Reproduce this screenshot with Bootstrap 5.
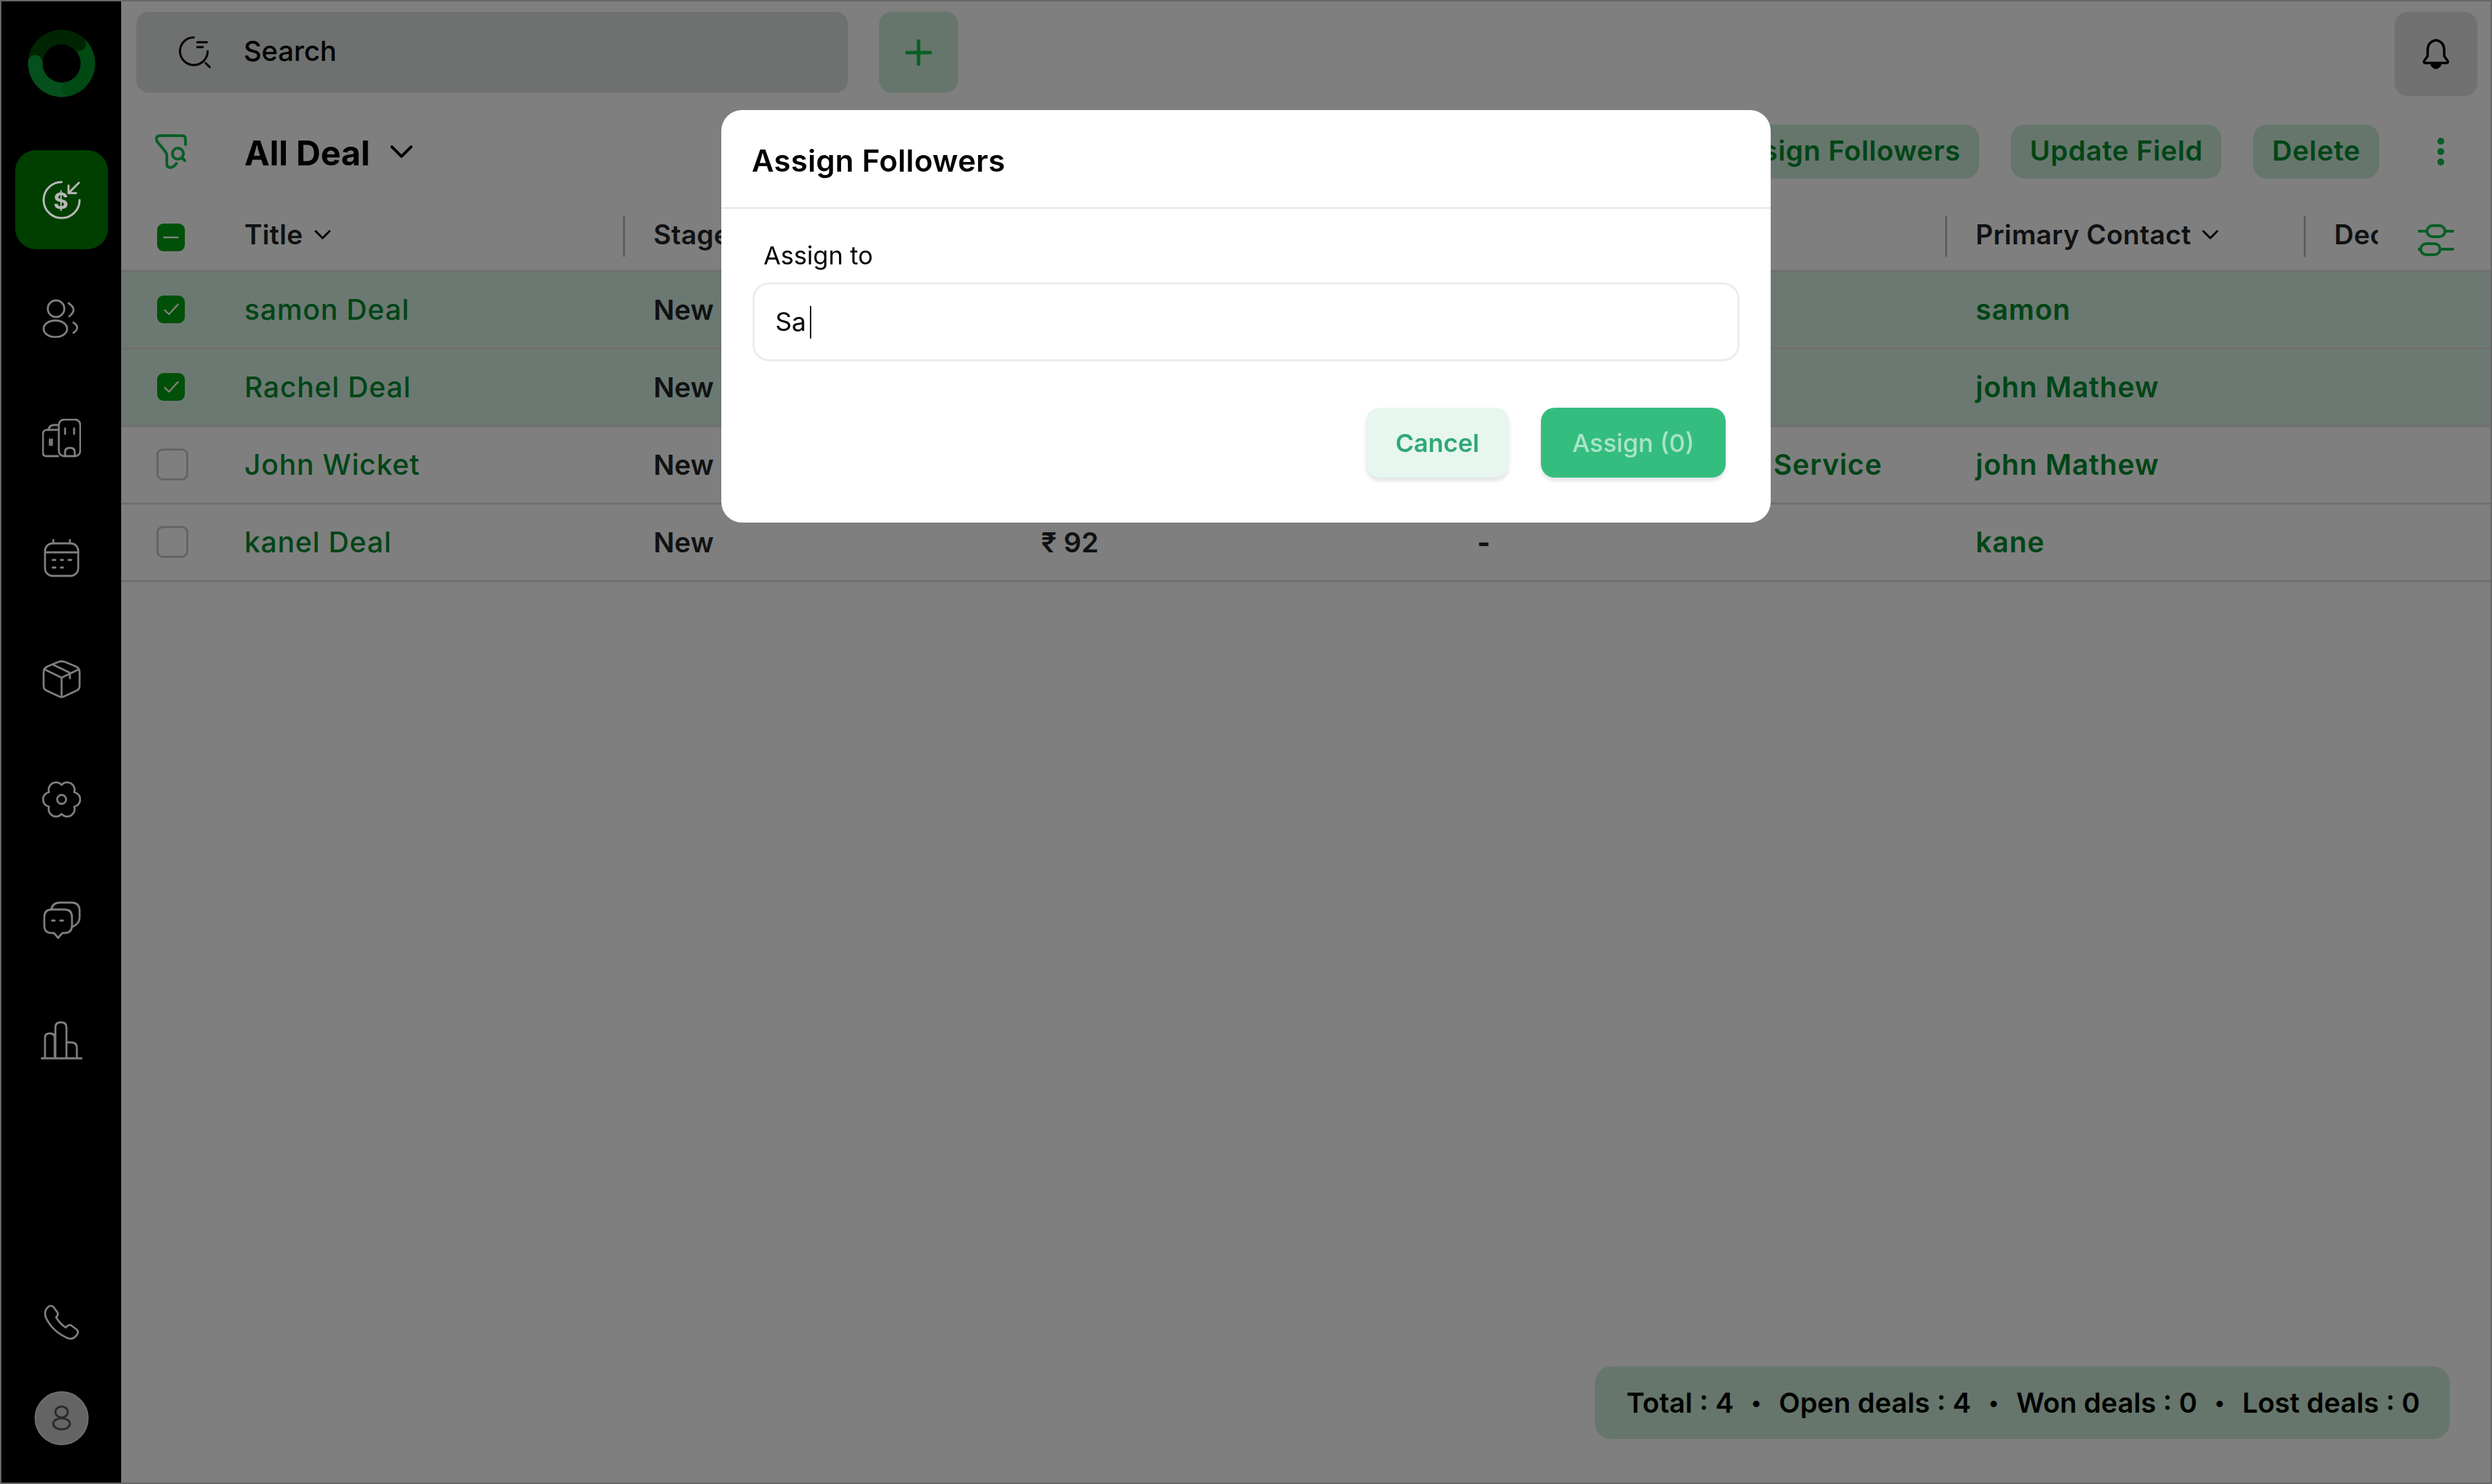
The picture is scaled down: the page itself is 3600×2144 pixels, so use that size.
<!DOCTYPE html>
<html lang="en">
<head>
<meta charset="utf-8">
<title>All Deal</title>
<link href="https://cdn.jsdelivr.net/npm/bootstrap@5.3.0/dist/css/bootstrap.min.css" rel="stylesheet">
<style>
:root{--leaf:#008a2e;--leaf-line:#12bc4a;--tint:#ccecd9;}
html,body{height:100%;}
body{font-family:"Inter","Liberation Sans",sans-serif;font-size:40px;color:#000;background:#fff;overflow:hidden;}
.app-frame{height:100vh;border:2px solid #ccc;}
.side-rail{width:173px;background:#000;flex:none;}
.brand-mark{width:100px;height:100px;margin-top:40px;}
.rail-active{width:134px;height:143px;margin-top:75px;margin-bottom:12px;border-radius:30px;background:#007e00;}
.rail-active svg{position:relative;z-index:1060;}
.rail-item{height:174px;}
.rail-line{fill:none;stroke:#fff;stroke-width:2.8;stroke-linecap:round;stroke-linejoin:round;}
.rail-bottom{margin-top:auto;margin-bottom:54px;gap:71px;}
.user-chip{width:78px;height:78px;border-radius:50%;background:#c8c8c8;border:2px solid #e0e0e0;}
.main-pane{min-width:0;}
.top-strip{padding:15px 19px 0 22px;}
.search-box{width:1028px;height:117px;border-radius:18px;background:#dde2de;padding-left:61px;font-weight:500;}
.search-box span{margin-left:46px;margin-top:-4px;}
.add-tile{width:114px;height:117px;margin-left:45px;border-radius:18px;background:var(--tint);}
.bell-tile{width:120px;height:122px;margin-left:auto;border-radius:20px;background:#e3e3e3;}
.tool-strip{height:78px;margin-top:41px;padding-left:49px;padding-right:63px;}
.view-name{font-size:49px;font-weight:700;margin-left:83px;line-height:1;padding-top:4px;}
.view-caret{margin-left:28px;}
.act-pill{height:78px;border:0;border-radius:20px;background:var(--tint);color:var(--leaf);font-size:40px;letter-spacing:.6px;font-weight:600;padding:0 27px 3px;line-height:1;margin-left:46px;}
.act-pill:first-of-type{margin-left:auto;}
.kebab-glyph{margin-left:80px;}
.deal-grid{table-layout:fixed;width:3423px;margin:0;--bs-table-bg:transparent;}
.deal-grid th,.deal-grid td{padding:0;border-bottom:3px solid #dedede;vertical-align:middle;font-size:40px;white-space:nowrap;overflow:hidden;}
.deal-grid th{height:133px;vertical-align:bottom;padding-bottom:19px;font-size:39px;letter-spacing:.3px;font-weight:600;}
.deal-grid td{height:112px;}
.head-cell{height:59px;border-left:3px solid #bebebe;padding-left:41px;padding-bottom:4px;overflow:hidden;}
.head-first{border-left:0;padding-left:0;}
.filter-slot{padding-left:58px;}
.picked-row td{background:#d9f2e4;}
.deal-grid td.deal-name{color:var(--leaf);font-weight:500;font-size:41px;letter-spacing:.9px;padding-top:2px;}
.deal-grid td.stage-cell{padding-left:44px;font-weight:600;padding-top:2px;}
.deal-grid td.dash-cell{font-weight:800;}
.pick-box.form-check-input{display:block;width:46px;height:46px;margin:0 0 0 51px;border:3px solid #c8c8c8;border-radius:9px;background-color:#fff;}
.pick-box.form-check-input:checked,.pick-box.form-check-input:indeterminate{width:40px;height:40px;margin-left:52px;background-color:#00a010;border:0;background-image:url("data:image/svg+xml,%3csvg xmlns='http://www.w3.org/2000/svg' viewBox='0 0 40 40'%3e%3cpath fill='none' stroke='%23fff' stroke-width='2.4' stroke-linecap='round' stroke-linejoin='round' d='M11 21l6 6 13-14'/%3e%3c/svg%3e");}
.pick-box.form-check-input:indeterminate{margin-bottom:8px;background-image:url("data:image/svg+xml,%3csvg xmlns='http://www.w3.org/2000/svg' viewBox='0 0 40 40'%3e%3cpath fill='none' stroke='%23fff' stroke-width='2.6' stroke-linecap='round' d='M10 20h20'/%3e%3c/svg%3e");}
.sum-bar{align-self:flex-end;margin:auto 59px 63px 0;height:105px;padding:0 43px 0 46px;border-radius:24px;background:var(--tint);font-weight:600;gap:25px;}
.sum-dot{font-size:30px;}
.assign-dialog{max-width:1516px;margin:159px auto 0;}
.assign-dialog .modal-content{height:596px;border:0;border-radius:30px;}
.assign-dialog .modal-header{height:143px;padding:6px 44px 0;border-bottom:3px solid #ececec;border-radius:30px 30px 0 0;}
.assign-dialog .modal-title{font-size:44px;letter-spacing:.3px;font-weight:600;line-height:1;}
.assign-dialog .modal-body{padding:36px 45px 0;flex:none;}
.assign-label{font-size:36px;margin:0 0 0 16px;height:70px;line-height:63px;display:block;}
.assign-input.form-control{height:114px;border:3px solid #ececec;border-radius:24px;font-size:37px;padding:0 30px;color:#000;}
.text-caret{display:inline-block;width:2px;height:47px;background:#000;margin-left:5px;}
.assign-dialog .modal-footer{border:0;padding:67px 65px 0 0;gap:46px;justify-content:flex-end;}
.assign-dialog .modal-footer>*{margin:0;}
.foot-btn{height:101px;border:0;border-radius:20px;font-size:36px;font-weight:600;box-shadow:0 5px 5px rgba(0,0,0,.1);}
.foot-cancel{width:207px;background:#e7f6ef;color:#2fa876;}
.foot-go{width:267px;background:#35bd80;color:#a8e4c8;font-weight:500;}
</style>
</head>
<body>
<div class="app-frame d-flex">
  <aside class="side-rail d-flex flex-column align-items-center">
    <svg class="brand-mark" viewBox="0 0 100 100" fill="none" stroke-width="21">
      <path d="M12 48A38 38 0 0 1 75 21" stroke="#024a04"/>
      <path d="M61 86A38 38 0 0 1 12 48" stroke="#0aa038" stroke-linecap="round"/>
      <path d="M75 21A38 38 0 0 1 61 86" stroke="#009226" stroke-linecap="round"/>
      <path d="M66 16A38 38 0 0 1 75 21" stroke="#024a04" stroke-linecap="round"/>
    </svg>
    <div class="rail-active d-flex align-items-center justify-content-center">
      <svg width="60" height="60" viewBox="0 0 60 60" fill="none" stroke="#b8b8b8" stroke-width="3" stroke-linecap="round" stroke-linejoin="round">
        <path d="M30 4A26 26 0 1 0 56 30"/><path d="M55 5L40 20M40 9V20H51"/>
        <text x="29" y="43" text-anchor="middle" font-size="33" font-weight="700" font-family="Inter" fill="#b8b8b8" stroke="none">$</text>
      </svg>
    </div>
    <div class="rail-item d-flex align-items-center">
      <svg width="56" height="58" viewBox="0 0 56 58" class="rail-line"><circle cx="20" cy="16" r="12"/><ellipse cx="19" cy="45" rx="17" ry="12"/><path d="M38 8Q52 17 39 27M45 36Q56 43 45 51"/></svg>
    </div>
    <div class="rail-item d-flex align-items-center">
      <svg width="56" height="56" viewBox="0 0 56 56" class="rail-line"><path d="M23 54H6Q1 54 1 49V22Q1 17 6 16L9 16Q10 10 16 9H22"/><path d="M9 16H23"/><rect x="24" y="1" width="31" height="53" rx="8"/><path d="M33 14V22M46 14V22M33 54V48Q33 42 40 42Q47 42 47 48V54M11 30V38M14 30V38"/></svg>
    </div>
    <div class="rail-item d-flex align-items-center">
      <svg width="56" height="56" viewBox="0 0 56 56" class="rail-line"><rect x="4" y="6" width="48" height="47" rx="11"/><path d="M4 19H52M16 1V6M40 1V6M15 30H19M27 30H30M38 30H42M15 41H19M27 41H30"/></svg>
    </div>
    <div class="rail-item d-flex align-items-center">
      <svg width="56" height="56" viewBox="0 0 56 56" class="rail-line"><path d="M24 3Q28 2 32 3L49 10Q54 13 54 18V38Q54 43 49 45L32 53Q28 55 24 53L7 45Q2 43 2 38V18Q2 13 7 10Z"/><path d="M3 14L28 26L53 14M28 26V54M15 7L40 19V27"/></svg>
    </div>
    <div class="rail-item d-flex align-items-center">
      <svg width="56" height="54" viewBox="0 0 56 54" class="rail-line"><path d="M28 6A10.7 10.7 0 0 1 46.2 16.5A10.7 10.7 0 0 1 46.2 37.5A10.7 10.7 0 0 1 28 48A10.7 10.7 0 0 1 9.8 37.5A10.7 10.7 0 0 1 9.8 16.5A10.7 10.7 0 0 1 28 6Z"/><circle cx="28" cy="27" r="6.5"/></svg>
    </div>
    <div class="rail-item d-flex align-items-center">
      <svg width="56" height="56" viewBox="0 0 56 56" class="rail-line"><path d="M14 13H32Q43 13 43 24V36Q43 47 32 47H29L23 54L17 47H14Q3 47 3 36V24Q3 13 14 13Z"/><path d="M13 13Q15 3 26 3H42Q54 3 54 15V25Q54 33 44 38M14 29H18M26 29H30"/></svg>
    </div>
    <div class="rail-item d-flex align-items-center">
      <svg width="60" height="56" viewBox="0 0 60 56" class="rail-line"><path d="M1 54H59M6 54V24Q6 18 13 18Q20 18 20 24V54M21 54V9Q21 2 29 2Q37 2 37 9V54M37 31H43Q52 31 52 38V54"/></svg>
    </div>
    <div class="rail-bottom d-flex flex-column align-items-center">
      <svg width="56" height="56" viewBox="0 0 56 56" class="rail-line"><path d="M6 8Q11 1 16 5L22 13Q24 16 20 20Q26 30 34 35Q38 30 42 32L50 38Q54 42 48 48Q43 53 36 50Q14 40 5 20Q3 13 6 8Z"/></svg>
      <div class="user-chip d-flex align-items-center justify-content-center">
        <svg width="40" height="44" viewBox="0 0 40 44" fill="none" stroke="#555" stroke-width="3"><ellipse cx="20" cy="13" rx="9" ry="8"/><ellipse cx="20" cy="30" rx="12" ry="8"/></svg>
      </div>
    </div>
  </aside>

  <main class="main-pane flex-grow-1 d-flex flex-column">
    <div class="top-strip d-flex align-items-start">
      <div class="search-box d-flex align-items-center">
        <svg width="48" height="48" viewBox="0 0 48 48" fill="none" stroke="#000" stroke-width="3" stroke-linecap="round"><path d="M22 2A20 20 0 1 0 42 22"/><path d="M27 9H41M27 16H35M39 39L45 45"/></svg>
        <span>Search</span>
      </div>
      <div class="add-tile d-flex align-items-center justify-content-center">
        <svg width="38" height="38" viewBox="0 0 38 38" stroke="#12bc4a" stroke-width="5" stroke-linecap="round"><path d="M19 2V36M2 19H36"/></svg>
      </div>
      <div class="bell-tile d-flex align-items-center justify-content-center">
        <svg width="40" height="46" viewBox="0 0 40 46" fill="none" stroke="#000" stroke-width="3.5" stroke-linejoin="round"><path d="M20 3Q8 5 8 18V26L3 33Q2 36 5 36H35Q38 36 37 33L32 26V18Q32 5 20 3Z"/><path d="M14 39Q20 47 26 39Z" fill="#000"/></svg>
      </div>
    </div>

    <div class="tool-strip d-flex align-items-center">
      <svg width="46" height="52" viewBox="0 0 46 52" fill="none" stroke="#12bc4a" stroke-width="4" stroke-linecap="round" stroke-linejoin="round"><path d="M44 16V8Q44 3 39 3H7Q2 3 2 8Q2 11 5 14L14 25Q17 28 17 33V44Q17 49 22 49Q26 49 31 43"/><circle cx="33" cy="29" r="8"/><path d="M39 35L43 39"/></svg>
      <span class="view-name">All Deal</span>
      <svg class="view-caret" width="34" height="20" viewBox="0 0 34 20" fill="none" stroke="#000" stroke-width="4" stroke-linecap="round" stroke-linejoin="round"><path d="M3 3L17 17L31 3"/></svg>
      <button type="button" class="btn act-pill">Assign Followers</button>
      <button type="button" class="btn act-pill">Update Field</button>
      <button type="button" class="btn act-pill">Delete</button>
      <svg class="kebab-glyph" width="18" height="44" viewBox="0 0 18 44" fill="#12bc4a"><circle cx="9" cy="7" r="5"/><circle cx="9" cy="22" r="5"/><circle cx="9" cy="37" r="5"/></svg>
    </div>

    <table class="table deal-grid">
      <colgroup>
        <col style="width:178px"><col style="width:547px"><col style="width:560px"><col style="width:630px"><col style="width:428px"><col style="width:292px"><col style="width:518px"><col style="width:107px"><col style="width:163px">
      </colgroup>
      <thead>
        <tr>
          <th><input class="form-check-input pick-box" id="pickAll" type="checkbox" aria-label="Select all"></th>
          <th><div class="head-cell head-first d-flex align-items-center">Title<svg class="ms-3" width="24" height="16" viewBox="0 0 24 16" fill="none" stroke="#000" stroke-width="3" stroke-linecap="round" stroke-linejoin="round"><path d="M2 3L12 13L22 3"/></svg></div></th>
          <th><div class="head-cell d-flex align-items-center">Stage</div></th>
          <th><div class="head-cell"></div></th>
          <th><div class="head-cell"></div></th>
          <th></th>
          <th><div class="head-cell d-flex align-items-center">Primary Contact<svg class="ms-3" width="24" height="16" viewBox="0 0 24 16" fill="none" stroke="#000" stroke-width="3" stroke-linecap="round" stroke-linejoin="round"><path d="M2 3L12 13L22 3"/></svg></div></th>
          <th><div class="head-cell d-flex align-items-center">Dec</div></th>
          <th><div class="filter-slot d-flex justify-content-start">
            <svg width="52" height="48" viewBox="0 0 52 48" fill="none" stroke="#12bc4a" stroke-width="4" stroke-linecap="round"><path d="M1 11H13M39 11H51M1 37H4M32 37H51"/><rect x="13" y="3" width="26" height="16" rx="8"/><rect x="4" y="29" width="28" height="16" rx="8"/></svg>
          </div></th>
        </tr>
      </thead>
      <tbody>
        <tr class="picked-row">
          <td><input class="form-check-input pick-box" type="checkbox" checked aria-label="Select samon Deal"></td>
          <td class="deal-name">samon Deal</td><td class="stage-cell">New</td><td></td><td></td><td></td><td class="deal-name stage-cell">samon</td><td></td><td></td>
        </tr>
        <tr class="picked-row">
          <td><input class="form-check-input pick-box" type="checkbox" checked aria-label="Select Rachel Deal"></td>
          <td class="deal-name">Rachel Deal</td><td class="stage-cell">New</td><td></td><td></td><td></td><td class="deal-name stage-cell">john Mathew</td><td></td><td></td>
        </tr>
        <tr>
          <td><input class="form-check-input pick-box" type="checkbox" aria-label="Select John Wicket"></td>
          <td class="deal-name">John Wicket</td><td class="stage-cell">New</td><td></td><td></td><td class="deal-name stage-cell">Service</td><td class="deal-name stage-cell">john Mathew</td><td></td><td></td>
        </tr>
        <tr>
          <td><input class="form-check-input pick-box" type="checkbox" aria-label="Select kanel Deal"></td>
          <td class="deal-name">kanel Deal</td><td class="stage-cell">New</td><td class="stage-cell">₹ 92</td><td class="stage-cell dash-cell">-</td><td></td><td class="deal-name stage-cell">kane</td><td></td><td></td>
        </tr>
      </tbody>
    </table>

    <div class="sum-bar d-flex align-items-center">
      <span>Total : 4</span><span class="sum-dot">•</span><span>Open deals : 4</span><span class="sum-dot">•</span><span>Won deals : 0</span><span class="sum-dot">•</span><span>Lost deals : 0</span>
    </div>
  </main>
</div>

<div class="modal-backdrop show"></div>
<div class="modal d-block" tabindex="-1" role="dialog" aria-modal="true">
  <div class="modal-dialog assign-dialog">
    <div class="modal-content">
      <div class="modal-header"><h5 class="modal-title">Assign Followers</h5></div>
      <div class="modal-body">
        <label class="assign-label">Assign to</label>
        <div class="form-control assign-input d-flex align-items-center"><span>Sa</span><span class="text-caret"></span></div>
      </div>
      <div class="modal-footer">
        <button type="button" class="btn foot-btn foot-cancel">Cancel</button>
        <button type="button" class="btn foot-btn foot-go">Assign (0)</button>
      </div>
    </div>
  </div>
</div>
<script src="https://cdn.jsdelivr.net/npm/bootstrap@5.3.0/dist/js/bootstrap.bundle.min.js"></script>
<script>document.getElementById('pickAll').indeterminate=true;</script>
</body>
</html>
